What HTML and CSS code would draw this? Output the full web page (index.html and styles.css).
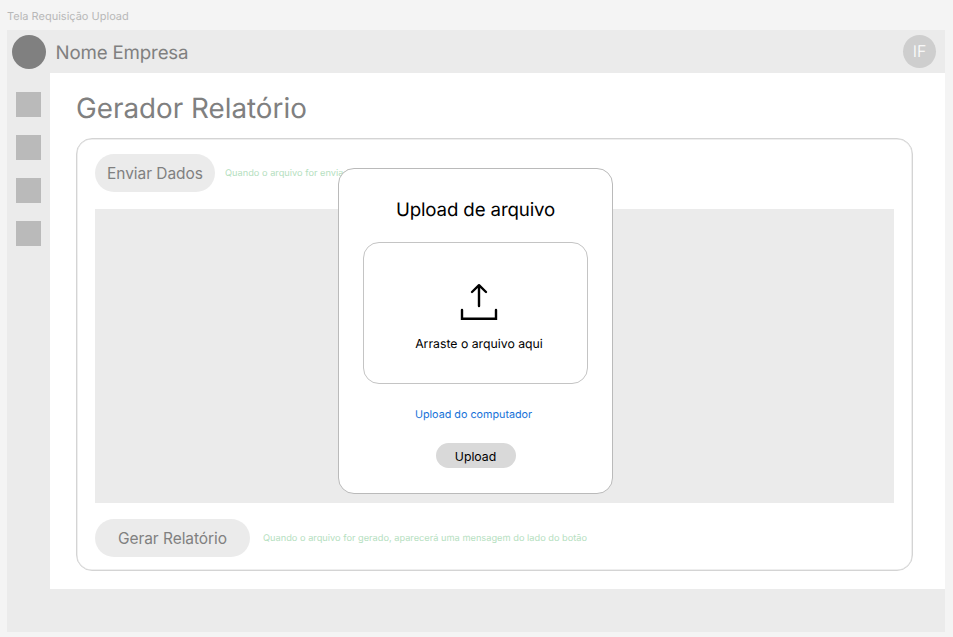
FILE: index.html
```html
<!DOCTYPE html>
<html lang="pt-BR">
<head>
<meta charset="utf-8">
<title>Tela Requisição Upload</title>
<link rel="stylesheet" href="styles.css">
</head>
<body>
<div class="frame-label">Tela Requisição Upload</div>
<div class="frame">
  <header class="topbar">
    <div class="brand"><span class="logo"></span><span class="company">Nome Empresa</span></div>
    <div class="avatar">IF</div>
  </header>
  <div class="body">
    <nav class="sidebar"><i class="item"></i><i class="item"></i><i class="item"></i><i class="item"></i></nav>
    <main class="content">
      <h1 class="title">Gerador Relatório</h1>
      <section class="card">
        <div class="row">
          <button class="pill send">Enviar Dados</button>
          <span class="hint">Quando o arquivo for enviado</span>
        </div>
        <div class="preview"></div>
        <div class="row">
          <button class="pill generate">Gerar Relatório</button>
          <span class="hint">Quando o arquivo for gerado, aparecerá uma mensagem do lado do botão</span>
        </div>
      </section>
    </main>
  </div>
</div>
<div class="modal">
  <h2 class="modal-title">Upload de arquivo</h2>
  <div class="dropzone">
    <svg class="upload-icon" width="38" height="38" viewBox="0 0 38 38" fill="none" stroke="#000" stroke-width="2.4" stroke-linecap="round" stroke-linejoin="round"><path d="M19 23V2.2M12 9L19 2.2L26 9"/><path stroke-linejoin="miter" d="M2 27V35.700H36V27"/></svg>
    <span class="drop-text">Arraste o arquivo aqui</span>
  </div>
  <a class="link">Upload do computador</a>
  <button class="upload">Upload</button>
</div>
</body>
</html>
```
FILE: styles.css
```css
* { box-sizing: border-box; }
body { margin: 0; width: 953px; height: 637px; overflow: hidden; padding: 0 8px 0 7px; background: #f4f4f4; font-family: Inter, sans-serif; font-weight: 400; color: #808080; text-rendering: geometricPrecision; }
button { border: 0; padding: 0; font-family: inherit; font-weight: inherit; color: inherit; }
.frame-label { height: 30px; padding-top: 9px; font-size: 11px; line-height: 14px; color: #b8b8b8; }
.frame { height: 602px; background: #ebebeb; }
.topbar { height: 43px; display: flex; justify-content: space-between; align-items: center; padding: 0 9px 0 5px; }
.brand { display: flex; align-items: center; gap: 10px; }
.logo { width: 34px; height: 34px; border-radius: 50%; background: #808080; }
.company { padding-top: 2px; margin-left: -.5px; font-size: 18.700px; letter-spacing: -.16px; }
.avatar { width: 33px; height: 33px; border-radius: 50%; background: #cecece; color: #fff; font-size: 16px; font-weight: 300; line-height: 33px; text-align: center; }
.body { display: flex; height: 516px; }
.sidebar { width: 43px; padding: 18.500px 0 0 9px; display: flex; flex-direction: column; gap: 18.200px; }
.item { width: 25px; height: 25px; background: #bababa; }
.content { flex: 1; background: #fff; padding: 15px 32px 0 26px; }
.title { margin: 0; height: 50px; font-size: 27.800px; font-weight: 400; line-height: 40px; }
.card { height: 433px; border: 1px solid #d4d4d4; box-shadow: inset 0 0 0 .5px #dedede; border-radius: 16px; padding: 15px 18px; display: flex; flex-direction: column; gap: 16px; }
.row { display: flex; align-items: center; height: 39px; flex: none; }
.pill { height: 38px; margin-bottom: 1px; border-radius: 20px; background: #ebebeb; font-size: 15.500px; letter-spacing: -.05px; }
.send { width: 120px; margin-right: 10px; }
.generate { width: 155px; margin-right: 13px; }
.hint { font-size: 9.250px; color: #b5e0c0; white-space: nowrap; }
.preview { height: 294px; background: #ebebeb; flex: none; }
.modal { position: absolute; left: 338px; top: 168px; width: 275px; height: 326px; border: 1px solid #bababa; border-radius: 16px; background: #fff; color: #000; display: flex; flex-direction: column; align-items: center; }
.modal-title { margin: 29px 0 20px; font-size: 18.700px; letter-spacing: -.14px; font-weight: 400; line-height: 24px; }
.dropzone { width: 225px; height: 142px; border: 1px solid #c4c4c4; border-radius: 16px; display: flex; flex-direction: column; align-items: center; padding-top: 40px; }
.upload-icon { margin-left: 7px; }
.drop-text { margin: 15px 0 0 7px; font-size: 12.270px; line-height: 16px; }
.link { margin: 23px 4px 0 0; font-size: 10.770px; line-height: 16px; color: #1672d8; }
.upload { margin-top: 20px; padding-top: 1px; width: 80px; height: 25px; border-radius: 13px; background: #d9d9d9; font-size: 12.270px; }
```
